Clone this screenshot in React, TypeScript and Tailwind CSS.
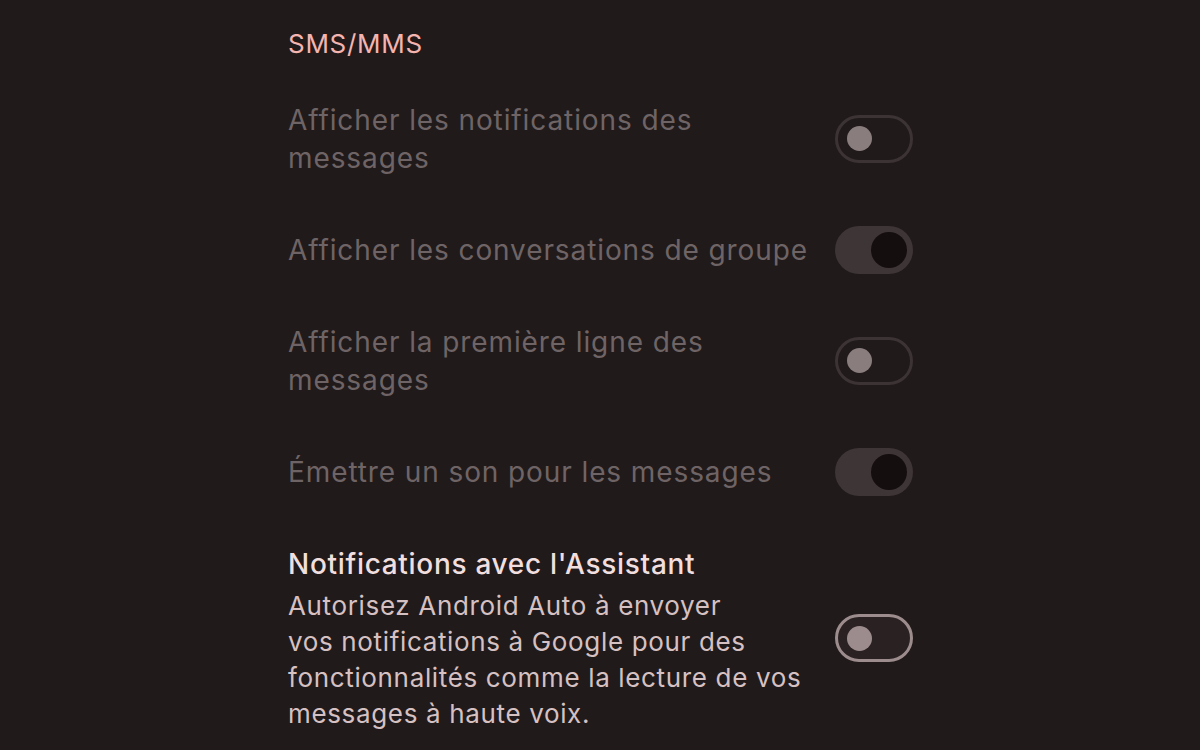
import React from "react";

type ToggleKind = "off" | "on" | "active-off";

function Toggle({ kind }: { kind: ToggleKind }) {
  if (kind === "on") {
    return (
      <div className="shrink-0 w-[78px] h-[48px] rounded-full bg-[#3e3536] flex items-center justify-end pr-[6px]">
        <div className="w-[36px] h-[36px] rounded-full bg-[#150e0f]" />
      </div>
    );
  }
  if (kind === "active-off") {
    return (
      <div className="shrink-0 w-[78px] h-[48px] rounded-full border-[3px] border-[#9d8c8d] bg-[#2a2122] flex items-center pl-[9px]">
        <div className="w-[25px] h-[25px] rounded-full bg-[#9d8c8d]" />
      </div>
    );
  }
  return (
    <div className="shrink-0 w-[78px] h-[48px] rounded-full border-[3px] border-[#3c3334] flex items-center pl-[9px]">
      <div className="w-[25px] h-[25px] rounded-full bg-[#8a7d7e]" />
    </div>
  );
}

function Row({ lines, kind }: { lines: string[]; kind: ToggleKind }) {
  return (
    <div className="h-[111px] flex items-center justify-between">
      <div className="text-[28px] leading-[38px] text-[#6f6465] tracking-[0.9px]">
        {lines.map((l, i) => (
          <div key={i}>{l}</div>
        ))}
      </div>
      <Toggle kind={kind} />
    </div>
  );
}

export default function App() {
  return (
    <div
      className="w-[1200px] h-[750px] overflow-hidden bg-[#201a1b]"
      style={{ fontFamily: "Inter, 'Noto Sans', sans-serif" }}
    >
      <div className="w-[625px] ml-[288px] pt-[27px]">
        <div className="text-[26px] leading-[34px] text-[#f4b5b0] mb-[22px] tracking-[0.7px]">SMS/MMS</div>
        <Row lines={["Afficher les notifications des", "messages"]} kind="off" />
        <Row lines={["Afficher les conversations de groupe"]} kind="on" />
        <Row lines={["Afficher la première ligne des", "messages"]} kind="off" />
        <Row lines={["Émettre un son pour les messages"]} kind="on" />
        <div className="flex items-center justify-between pt-[17px]">
          <div>
            <div className="text-[28px] leading-[40px] font-medium text-[#f1dfdf] tracking-[0.7px] mb-[4px]">
              Notifications avec l'Assistant
            </div>
            <div className="text-[26px] leading-[36px] text-[#d6c1c2] tracking-[0.65px]">
              <div>Autorisez Android Auto à envoyer</div>
              <div>vos notifications à Google pour des</div>
              <div>fonctionnalités comme la lecture de vos</div>
              <div>messages à haute voix.</div>
            </div>
          </div>
          <Toggle kind="active-off" />
        </div>
      </div>
    </div>
  );
}
